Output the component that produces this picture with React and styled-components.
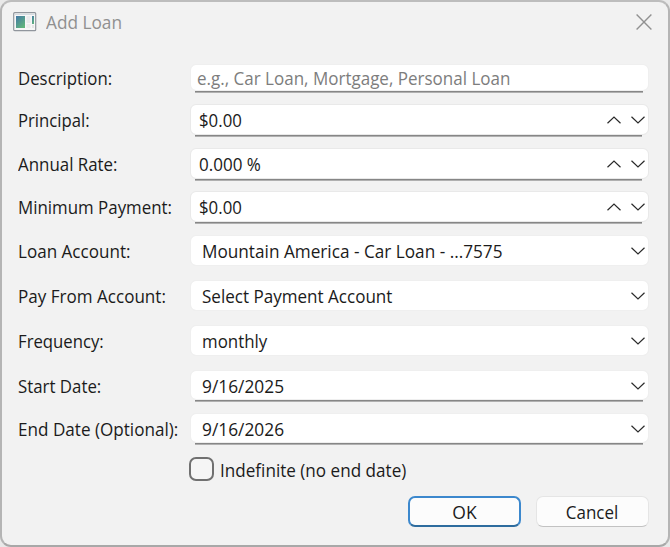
import React from "react";
import styled, { createGlobalStyle } from "styled-components";

const GlobalStyle = createGlobalStyle`
  * { box-sizing: border-box; }
  body { margin: 0; background: #e9e9e9; }
`;

const Dialog = styled.main`
  width: 670px;
  height: 547px;
  border: 2px solid #b5b5b5;
  border-top-color: #bdbdbd;
  border-bottom-color: #a8a8a8;
  border-radius: 11px;
  background: #f2f2f2;
  color: #1b1b1b;
  font: 17.5px/24px "Open Sans", "Noto Sans", sans-serif;
  display: flex;
  flex-direction: column;
  overflow: hidden;
`;

const TitleBar = styled.header`
  height: 40px;
  flex: none;
  display: flex;
  align-items: center;
  padding: 0 16px 0 11px;
  color: #909090;
`;

const Title = styled.div`
  flex: 1;
  margin-left: 9px;
`;

const Form = styled.form`
  display: flex;
  flex-direction: column;
  padding: 22px 19px 0 16px;
`;

const Row = styled.div`
  display: flex;
  height: ${(p) => p.$height}px;
  margin-bottom: ${(p) => p.$gap}px;
`;

const Label = styled.label`
  width: 172px;
  flex: none;
  line-height: ${(p) => p.$line}px;
`;

const Text = styled.span`
  display: inline-block;
  white-space: pre;
  transform: scaleX(${(p) => p.$stretch || 1});
  transform-origin: ${(p) => p.$origin || "left"} center;
`;

const Field = styled.div`
  flex: 1;
  position: relative;
  display: flex;
  align-items: center;
  height: 100%;
  padding: 0 3px 0 ${(p) => p.$inset}px;
  border: 1px solid ${(p) => (p.$spin ? "#e9e9e9" : "#efefef")};
  border-radius: 6px;
  background: #fff;
  background-clip: padding-box;
  color: ${(p) => (p.$placeholder ? "#7d7d7d" : "#1b1b1b")};

  &::after {
    content: "";
    display: ${(p) => (p.$underline ? "block" : "none")};
    position: absolute;
    left: 4px;
    right: ${(p) => (p.$spin ? 6 : 5)}px;
    bottom: -3px;
    height: 2px;
    background: linear-gradient(#868686 50%, #b0b0b0 50%);
  }
`;

const Value = styled.div`
  flex: 1;
  padding-top: ${(p) => p.$drop || 0}px;
`;

const Arrows = styled.div`
  display: flex;
  gap: 10px;
  padding-top: 1px;
`;

const CheckRow = styled.div`
  display: flex;
  align-items: center;
  height: 24px;
  margin-left: 171px;
  gap: 6px;
`;

const CheckBox = styled.span`
  width: 25px;
  height: 24px;
  border: 2px solid #707070;
  border-radius: 7px;
  background: #f5f5f5;
`;

const CheckLabel = styled.label`
  padding-top: 2px;
`;

const Buttons = styled.div`
  display: flex;
  justify-content: flex-end;
  gap: 15px;
  margin-top: 15px;
`;

const Button = styled.button`
  width: 113px;
  height: 31px;
  padding: 0;
  border: ${(p) => (p.$primary ? "2px solid #3c88cd" : "1px solid #e5e5e5")};
  border-bottom-color: ${(p) => (p.$primary ? "#2e6c9e" : "#c2c2c2")};
  border-radius: 7px;
  background: #fcfcfc;
  color: #1b1b1b;
  font: inherit;
`;

const Chevron = ({ up }) => (
  <svg width="14" height="8" viewBox="0 0 14 8" fill="none" stroke="#2b2b2b" strokeWidth="1.2">
    <path d={up ? "M.5 7.2 7 1l6.5 6.2" : "M.5.8 7 7 13.5.8"} />
  </svg>
);

const AppIcon = () => (
  <svg width="24" height="20" viewBox="0 0 24 20">
    <defs>
      <linearGradient id="pane" x1="0" y1="0" x2="0.7" y2="1">
        <stop offset="0" stopColor="#4378a7" />
        <stop offset="1" stopColor="#61b57c" />
      </linearGradient>
    </defs>
    <rect x=".7" y=".7" width="22" height="18" rx="1" fill="#f7f7f7" stroke="#91969d" strokeWidth="1.2" />
    <path d="M2 2.5h19.5" stroke="#d6dce2" />
    <rect x="3" y="4" width="9" height="12" fill="url(#pane)" />
    <rect x="13.5" y="4" width="4" height="7" fill="#e9eaec" />
    <rect x="13.5" y="12" width="4" height="4" fill="#ececec" />
    <rect x="19" y="4" width="2" height="8" fill="url(#pane)" />
    <rect x="19" y="13" width="2" height="3" fill="#e5e5e5" />
  </svg>
);

const CloseIcon = () => (
  <svg width="16" height="16" viewBox="0 0 16 16" stroke="#919191" strokeWidth="1.4">
    <path d="M.6.6l14.8 14.8M15.4.6.6 15.4" />
  </svg>
);

const rows = [
  { label: "Description:", labelStretch: 0.96, value: "e.g., Car Loan, Mortgage, Personal Loan", stretch: 0.972, drop: 1, kind: "text", height: 27, gap: 13, line: 29 },
  { label: "Principal:", labelStretch: 0.953, value: "$0.00", stretch: 0.96, kind: "spin", height: 31, gap: 13, line: 33 },
  { label: "Annual Rate:", labelStretch: 0.965, value: "0.000 %", stretch: 0.972, kind: "spin", height: 31, gap: 12, line: 32 },
  { label: "Minimum Payment:", labelStretch: 0.965, value: "$0.00", stretch: 0.96, kind: "spin", height: 31, gap: 13, line: 33 },
  { label: "Loan Account:", labelStretch: 0.975, value: "Mountain America - Car Loan - ...7575", stretch: 0.982, drop: 1, kind: "combo", height: 31, gap: 14, line: 33 },
  { label: "Pay From Account:", labelStretch: 0.975, value: "Select Payment Account", stretch: 0.974, drop: 1, kind: "combo", height: 31, gap: 14, line: 33 },
  { label: "Frequency:", labelStretch: 0.955, value: "monthly", stretch: 0.965, drop: 1, kind: "combo", height: 31, gap: 14, line: 33 },
  { label: "Start Date:", labelStretch: 0.962, value: "9/16/2025", stretch: 0.99, drop: 2, kind: "date", height: 30, gap: 13, line: 32 },
  { label: "End Date (Optional):", labelStretch: 0.977, value: "9/16/2026", stretch: 0.99, drop: 2, kind: "date", height: 30, gap: 14, line: 33 },
];

const insets = { text: 6, spin: 8, combo: 10.5, date: 10.5 };

export default function App() {
  return (
    <>
      <GlobalStyle />
      <Dialog>
        <TitleBar>
          <AppIcon />
          <Title><Text $stretch={0.985}>Add Loan</Text></Title>
          <CloseIcon />
        </TitleBar>
        <Form>
          {rows.map((r) => (
            <Row key={r.label} $height={r.height} $gap={r.gap}>
              <Label $line={r.line}><Text $stretch={r.labelStretch}>{r.label}</Text></Label>
              <Field
                $inset={insets[r.kind]}
                $spin={r.kind === "spin"}
                $placeholder={r.kind === "text"}
                $underline={r.kind !== "combo"}
              >
                <Value $drop={r.drop}><Text $stretch={r.stretch}>{r.value}</Text></Value>
                {r.kind !== "text" && (
                  <Arrows>
                    {r.kind === "spin" && <Chevron up />}
                    <Chevron />
                  </Arrows>
                )}
              </Field>
            </Row>
          ))}
          <CheckRow>
            <CheckBox />
            <CheckLabel><Text $stretch={0.977}>Indefinite (no end date)</Text></CheckLabel>
          </CheckRow>
          <Buttons>
            <Button type="button" $primary><Text $origin="center">OK</Text></Button>
            <Button type="button"><Text $origin="center" $stretch={0.97}>Cancel</Text></Button>
          </Buttons>
        </Form>
      </Dialog>
    </>
  );
}
